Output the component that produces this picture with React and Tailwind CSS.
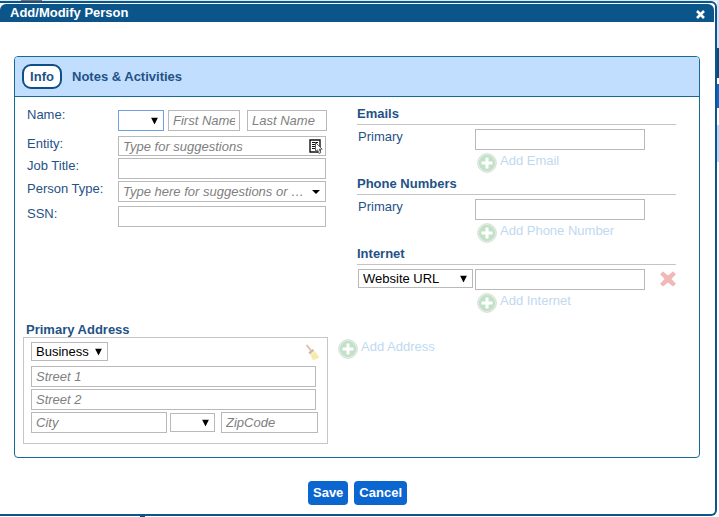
import React from "react";

const fieldClass =
  "block min-w-0 border border-[#b9b9b9] bg-white px-1 text-[13px] leading-4 text-[#333] outline-none placeholder:italic placeholder:text-[#808080]";

function Caret({ className = "" }) {
  return (
    <svg
      viewBox="0 0 7 7"
      className={`pointer-events-none absolute top-1/2 h-[7px] w-[7px] -translate-y-1/2 ${className}`}
      aria-hidden="true"
    >
      <path d="M0 0h7L3.500 7z" fill="#000" />
    </svg>
  );
}

function Select({ label, options, className = "", borderClass = "border-[#b9b9b9]" }) {
  return (
    <div className={`relative shrink-0 ${className}`}>
      <select
        aria-label={label}
        className={`block h-full w-full appearance-none rounded-none border bg-white pl-1 text-[13px] leading-4 text-black outline-none ${borderClass}`}
      >
        {options.map((o) => (
          <option key={o}>{o}</option>
        ))}
      </select>
      <Caret className="right-[6px]" />
    </div>
  );
}

function PlusIcon() {
  return (
    <svg viewBox="0 0 20 20" className="h-5 w-5 shrink-0" aria-hidden="true">
      <circle cx="10" cy="10" r="9.300" fill="#f4f8f4" stroke="#c9d6ca" strokeWidth=".9" />
      <circle cx="10" cy="10" r="7.800" fill="#c2e2c8" stroke="#b7d6bc" strokeWidth=".6" />
      <path d="M8.500 4.500h3v4h4v3h-4v4h-3v-4h-4v-3h4z" fill="#fff" />
    </svg>
  );
}

function AddButton({ children, className = "" }) {
  return (
    <button type="button" className={`flex h-5 items-start gap-[3px] text-[#c0d9f0] ${className}`}>
      <PlusIcon />
      <span className="leading-4">{children}</span>
    </button>
  );
}

function RemoveIcon() {
  return (
    <svg viewBox="0 0 16 16" className="h-4 w-4" aria-hidden="true">
      <path
        d="M3 .8 8 5l5-4.200 2.500 2.400L11 8l4.500 4.800-2.500 2.400L8 11l-5 4.200-2.500-2.400L5 8 .5 3.200z"
        fill="#f0b9b5"
        stroke="#ecaeaa"
        strokeWidth=".6"
      />
    </svg>
  );
}

function BroomIcon() {
  return (
    <svg viewBox="0 0 16 17" className="h-[17px] w-4" aria-hidden="true">
      <path d="M2 1.500 5.500 6" stroke="#e6bfa8" strokeWidth="2" strokeLinecap="round" />
      <path d="M3.500 8.500 7.500 5l1.800 1.600L5 10.400z" fill="#cbb4b8" />
      <path d="M5 10.500 9.500 6.600 14.500 13c-1.500 2-4 3-7 2.800z" fill="#f8edb4" />
      <path d="m7 11 2 4m0-5.500 2.700 4.500" stroke="#efdf9a" strokeWidth=".7" />
    </svg>
  );
}

function LookupIcon() {
  return (
    <svg viewBox="0 0 15 15" className="h-[15px] w-[15px]" aria-hidden="true">
      <path d="M1 1h10v12H1z" fill="#fff" stroke="#111" strokeWidth="1.400" />
      <path d="M3 3.500h6M3 5.500h6M3 7.500h6M3 9.500h6" stroke="#111" />
      <path d="M6.500 3.500v9l2-1.700 1.600 3.700 1.700-.8-1.600-3.500h3z" fill="#fff" stroke="#555" strokeWidth=".9" />
    </svg>
  );
}

function Row({ label, htmlFor, className = "", children }) {
  return (
    <div className={`flex items-start ${className}`}>
      <label htmlFor={htmlFor} className="w-[91px] shrink-0 leading-4">
        {label}
      </label>
      {children}
    </div>
  );
}

function ContactGroup({ title, lead, label, add, removable }) {
  return (
    <section className="pb-[2px]">
      <h2 className="h-5 border-b border-[#c4c4c4] font-bold leading-[18px]">{title}</h2>
      <div className="mt-1 flex items-start">
        <div className="w-[118px] shrink-0 pl-px leading-4">{lead}</div>
        <input type="text" aria-label={label} className={`${fieldClass} h-[21px] w-[170px]`} />
        {removable && (
          <button type="button" aria-label="Remove" className="ml-auto mt-[2px]">
            <RemoveIcon />
          </button>
        )}
      </div>
      <AddButton className="ml-[120px] mt-[3px]">{add}</AddButton>
    </section>
  );
}

export default function App() {
  return (
    <div className="flex flex-col bg-[#d5edf6] font-['Liberation_Sans',Arial,sans-serif] text-[13px] text-[#1f5286]">
      <div className="h-px pl-[21px]">
        <div className="h-px w-[21px] bg-[#8a6a62]" />
      </div>
      <div className="flex bg-white">
        <main className="min-w-0 flex-1 rounded-r-md border-y-2 border-r-2 border-[#0b558b] bg-white">
          <header className="mr-px mt-px flex h-[18px] items-center rounded-t-md bg-[#0b558b] pl-[10px] pr-[9px] text-white">
            <h1 className="flex-1 font-bold leading-4">Add/Modify Person</h1>
            <button type="button" aria-label="Close">
              <svg viewBox="0 0 9 9" className="mt-[2px] h-[9px] w-[9px]" aria-hidden="true">
                <path d="M1 1l7 7M8 1L1 8" stroke="#fff" strokeWidth="2.600" />
              </svg>
            </button>
          </header>

          <div className="ml-[14px] mr-[15px] mt-[34px] rounded border border-[#166b94]">
            <nav className="flex h-10 items-center gap-[10px] rounded-t-[3px] border-b border-[#166b94] bg-[#c1deff] pl-[7px] font-bold">
              <button type="button" className="h-[25px] w-10 rounded-[9px] border-2 border-[#0f4f86] bg-white">
                Info
              </button>
              <button type="button">Notes &amp; Activities</button>
            </nav>

            <div className="flex pb-[13px]">
              <div className="w-[342px] shrink-0">
                <div className="h-[222px] pl-3 pt-[10px]">
                  <Row label="Name:" htmlFor="first">
                    <div className="mt-[3px] flex">
                      <Select label="Title" options={[""]} className="h-[21px] w-[46px]" borderClass="border-[#6f9fe0]" />
                      <input id="first" placeholder="First Name" className={`${fieldClass} ml-1 h-[21px] w-[72px]`} />
                      <input aria-label="Last Name" placeholder="Last Name" className={`${fieldClass} ml-[7px] h-[21px] w-20`} />
                    </div>
                  </Row>
                  <Row label="Entity:" htmlFor="entity" className="mt-[5px]">
                    <div className="relative">
                      <input id="entity" placeholder="Type for suggestions" className={`${fieldClass} h-5 w-[208px]`} />
                      <button type="button" aria-label="Look up" className="absolute right-[2px] top-[3px]">
                        <LookupIcon />
                      </button>
                    </div>
                  </Row>
                  <Row label="Job Title:" htmlFor="job" className="mt-[2px]">
                    <input id="job" className={`${fieldClass} h-[21px] w-[208px]`} />
                  </Row>
                  <Row label="Person Type:" htmlFor="ptype" className="mt-[2px]">
                    <div className="relative">
                      <input
                        id="ptype"
                        placeholder="Type here for suggestions or …"
                        className={`${fieldClass} h-[21px] w-[208px]`}
                      />
                      <svg viewBox="0 0 8 4" className="pointer-events-none absolute right-[6px] top-[9px] h-1 w-2" aria-hidden="true">
                        <path d="M0 0h8L4 4z" />
                      </svg>
                    </div>
                  </Row>
                  <Row label="SSN:" htmlFor="ssn" className="mt-1">
                    <input id="ssn" className={`${fieldClass} h-[21px] w-[208px]`} />
                  </Row>
                </div>

                <h2 className="h-[18px] pl-[11px] pt-[2px] font-bold leading-[18px]">Primary Address</h2>
                <div className="flex items-start gap-[10px] whitespace-nowrap pl-2">
                  <div className="w-[305px] shrink-0 border border-[#c6c6c6] pb-[10px] pl-[7px] pt-1">
                    <div className="flex">
                      <Select label="Address type" options={["Business"]} className="h-[19px] w-[77px]" />
                      <button type="button" aria-label="Clear address" className="ml-auto mr-[6px] mt-[2px]">
                        <BroomIcon />
                      </button>
                    </div>
                    <input aria-label="Street 1" placeholder="Street 1" className={`${fieldClass} mt-[5px] h-[21px] w-[285px]`} />
                    <input aria-label="Street 2" placeholder="Street 2" className={`${fieldClass} mt-[2px] h-[21px] w-[285px]`} />
                    <div className="mt-[2px] flex items-center">
                      <input aria-label="City" placeholder="City" className={`${fieldClass} h-[21px] w-[136px]`} />
                      <Select label="State" options={[""]} className="ml-[3px] h-[19px] w-[45px]" />
                      <input aria-label="ZipCode" placeholder="ZipCode" className={`${fieldClass} ml-[6px] h-[21px] w-[97px]`} />
                    </div>
                  </div>
                  <AddButton className="mt-[2px]">Add Address</AddButton>
                </div>
              </div>

              <div className="mr-[23px] flex-1 pt-2">
                <ContactGroup title="Emails" label="Primary email" lead="Primary" add="Add Email" />
                <ContactGroup title="Phone Numbers" label="Primary phone" lead="Primary" add="Add Phone Number" />
                <ContactGroup
                  title="Internet"
                  label="Website"
                  lead={<Select label="Internet type" options={["Website URL"]} className="h-[19px] w-[115px]" />}
                  add="Add Internet"
                  removable
                />
              </div>
            </div>
          </div>

          <footer className="mb-[9px] mt-[23px] flex justify-center gap-[6px] font-bold text-white">
            <button type="button" className="h-6 rounded-sm bg-[#0b66cf] px-[5px]">
              Save
            </button>
            <button type="button" className="h-6 rounded-sm bg-[#0b66cf] px-[5px]">
              Cancel
            </button>
          </footer>
        </main>
        <div className="flex w-[2px] shrink-0 flex-col">
          <div className="h-[47px] bg-[#cfe4fb]" />
          <div className="h-[30px] bg-[#0b4c80]" />
          <div className="mt-[6px] h-6 bg-[#0b66cf]" />
          <div className="mt-[17px] h-[37px] bg-[#b5d9fb]" />
        </div>
      </div>
      <div className="h-px bg-white pl-[140px]">
        <div className="h-px w-[5px] bg-[#0b4c80]" />
      </div>
    </div>
  );
}
